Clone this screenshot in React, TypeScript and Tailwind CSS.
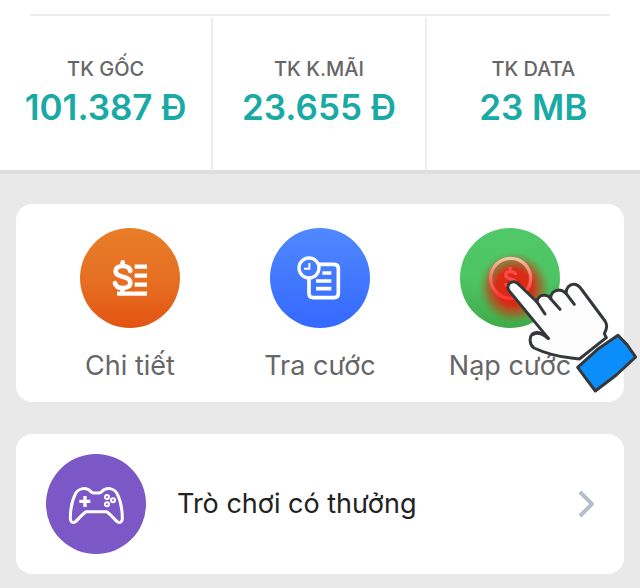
import type { ReactNode } from "react";

const BALANCES = [
  { label: "TK GỐC", value: "101.387 Đ" },
  { label: "TK K.MÃI", value: "23.655 Đ" },
  { label: "TK DATA", value: "23 MB" },
];

function DetailIcon() {
  return (
    <svg viewBox="30 24 300 300" className="w-full" fill="none" stroke="#fff" aria-hidden="true">
      <path
        d="M181 153c-2-10-11-15-23-15-13 0-21 6-21 15 0 11 9 14 21 17 14 3 23 8 23 18s-9 16-23 16c-13 0-21-6-23-15M158 127v10M157 205v8"
        strokeWidth="14"
        strokeLinecap="round"
      />
      <path d="M194 140h37M194 167h37M194 194h37M141 221h90" strokeWidth="13" />
    </svg>
  );
}

function LookupIcon() {
  return (
    <svg viewBox="30 24 300 300" className="w-full" fill="none" stroke="#fff" aria-hidden="true">
      <circle cx="147" cy="144" r="30" strokeWidth="10" />
      <path d="M148 129v17h-16" strokeWidth="6" />
      <path d="M177 133h45q13 0 13 13v74q0 13-13 13h-62q-13 0-13-13v-46" strokeWidth="11" />
      <path d="M187 159h27M168 183h46M168 206h46" strokeWidth="11" />
    </svg>
  );
}

function TopUpIcon() {
  return (
    <svg viewBox="60 39 300 300" className="w-full" fill="none" aria-hidden="true">
      <defs>
        <radialGradient id="press">
          <stop offset="0" stopColor="#e8200f" />
          <stop offset="0.5" stopColor="#dc2712" stopOpacity="0.95" />
          <stop offset="0.75" stopColor="#b84a1c" stopOpacity="0.6" />
          <stop offset="1" stopColor="#7a8a2c" stopOpacity="0" />
        </radialGradient>
        <linearGradient id="coin" x1="0" y1="0" x2="0" y2="1">
          <stop offset="0" stopColor="#f5c4a8" />
          <stop offset="0.5" stopColor="#ff6a64" />
          <stop offset="1" stopColor="#ff3434" />
        </linearGradient>
      </defs>
      <circle cx="222" cy="218" r="108" fill="url(#press)" />
      <circle cx="212" cy="190" r="60" stroke="url(#coin)" strokeWidth="10" />
      <path
        d="M227 180c-1-7-7-10-15-10-9 0-15 4-15 10 0 8 7 10 15 12 9 2 16 5 16 12s-7 11-16 11c-8 0-14-3-15-10M211 156v14M211 215v10"
        stroke="#ff4a4a"
        strokeWidth="10"
      />
    </svg>
  );
}

function GamepadIcon() {
  return (
    <svg viewBox="30 30 300 300" className="w-full" fill="none" stroke="#fff" aria-hidden="true">
      <path
        d="M151 203h60c12 6 24 24 34 31 7 4 14-1 14-10 0-24-6-57-16-76-8-13-23-17-37-12-7 3-9 11-17 11h-16c-8 0-10-8-17-11-14-5-29-1-37 12-10 19-16 52-16 76 0 9 7 14 14 10 10-7 22-25 34-31Z"
        strokeWidth="9"
        strokeLinejoin="round"
      />
      <path d="M147 156v33M130 172h33" strokeWidth="10" />
      <g strokeWidth="6">
        <circle cx="213" cy="159" r="6" />
        <circle cx="231" cy="169" r="6" />
        <circle cx="213" cy="181" r="6" />
      </g>
    </svg>
  );
}

function PointingHand() {
  return (
    <svg viewBox="180 180 420 370" className="w-full" stroke="#35383b" strokeWidth="9" strokeLinejoin="round" strokeLinecap="round" aria-hidden="true">
      <path
        d="M325 370 207 227c-9-15 3-30 19-26 7 2 11 7 15 12l50 48c0-13 11-22 24-20 8 1 13 4 17 10 0-15 10-25 24-26 9 0 16 4 22 10 0-16 10-28 25-27 10 1 17 8 23 17l69 93c8 12 5 26-2 38l6 12-81 64-18-2c-40-4-84-15-118-31-14-10-15-32-5-42 12-9 30-2 46 12Z"
        fill="#fdfdfd"
      />
      <path d="m291 261 24 36M332 251l28 32M378 235l25 33M325 370c-13-11-32-20-46-12" fill="none" />
      <path d="m413 457 62-56 59-40 27 28 26 37-58 54-63 48-24-32Z" fill="#0b8dfa" />
    </svg>
  );
}

type ActionProps = {
  label: string;
  circle: string;
  icon: ReactNode;
  children?: ReactNode;
};

function Action({ label, circle, icon, children }: ActionProps) {
  return (
    <button type="button" className="relative flex flex-col items-center gap-4">
      <span className={`size-[100px] overflow-hidden rounded-full ${circle}`}>{icon}</span>
      <span className="text-[27px] leading-11 text-[#666]">{label}</span>
      {children}
    </button>
  );
}

export default function App() {
  return (
    <main className="min-h-screen bg-[#e9e9e9] pb-3.5 font-['Inter',sans-serif]">
      <section className="border-b-4 border-[#dedede] bg-white pt-3.5">
        <hr className="mx-[30px] mb-0.5 border-t-2 border-[#ececec]" />
        <dl className="grid grid-cols-3 divide-x-2 divide-[#ececec]">
          {BALANCES.map((item) => (
            <div key={item.label} className="flex flex-col items-center pt-[35px] pb-[41px] whitespace-nowrap">
              <dt className="text-[20px] leading-8 font-medium text-[#666]">{item.label}</dt>
              <dd className="text-[35px] leading-11 font-semibold text-[#1aaaa5]">{item.value}</dd>
            </div>
          ))}
        </dl>
      </section>

      <section className="mx-4 mt-[30px] grid grid-cols-3 rounded-2xl bg-white px-[19px] pt-6 pb-3.5">
        <Action label="Chi tiết" circle="bg-linear-to-b from-[#e87d28] via-[#e67022] to-[#e35312]" icon={<DetailIcon />} />
        <Action label="Tra cước" circle="bg-linear-to-b from-[#5088ff] to-[#3468ff]" icon={<LookupIcon />} />
        <Action label="Nạp cước" circle="bg-linear-to-b from-[#50c968] via-[#4ec463] to-[#40ab49]" icon={<TopUpIcon />}>
          <span className="pointer-events-none absolute top-[47px] left-1/2 -ml-[10px] w-[140px]">
            <PointingHand />
          </span>
        </Action>
      </section>

      <a href="#games" className="mx-4 mt-8 flex items-center rounded-2xl bg-white px-[30px] py-5">
        <span className="size-[100px] shrink-0 rounded-full bg-[#7c57c6]">
          <GamepadIcon />
        </span>
        <span className="ml-[31px] flex-1 text-[27px] leading-9 text-[#222]">Trò chơi có thưởng</span>
        <svg viewBox="0 0 16 28" className="h-7 w-4" fill="none" stroke="#b4bfcb" strokeWidth="4" aria-hidden="true">
          <path d="m2 2 12 12L2 26" />
        </svg>
      </a>
    </main>
  );
}
